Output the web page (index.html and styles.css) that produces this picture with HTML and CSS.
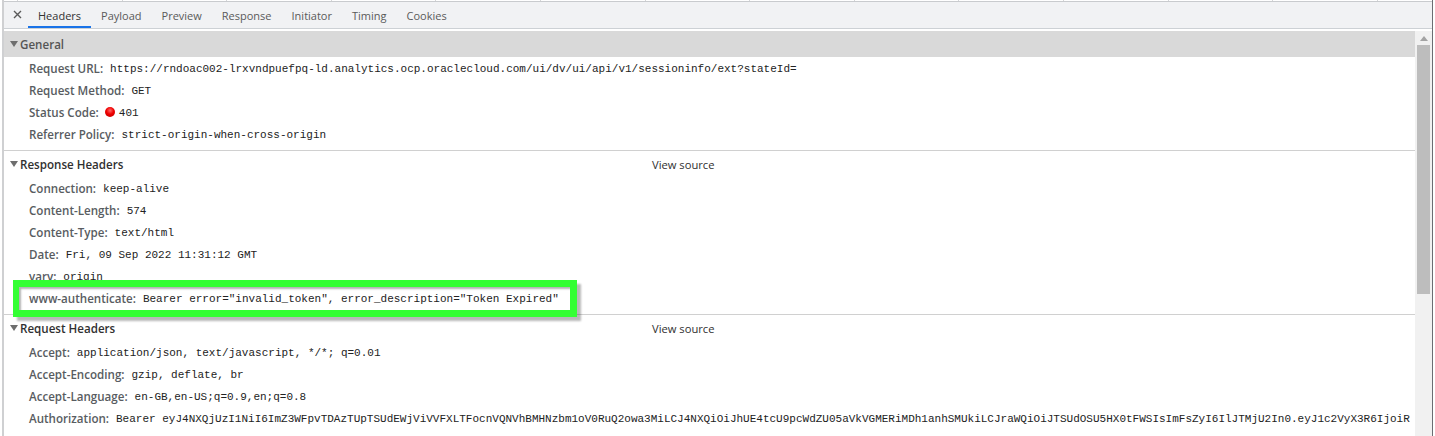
FILE: index.html
```html
<!DOCTYPE html>
<html lang="en">
<head>
<meta charset="utf-8">
<title>Headers</title>
<link rel="stylesheet" href="styles.css">
</head>
<body>
<div class="window">
  <div class="ruler"></div>
  <div class="tabbar">
    <svg class="close" width="9" height="9" viewBox="0 0 9 9"><path d="M1 1l7 7M8 1L1 8" stroke="#5a5a5a" stroke-width="1.4" fill="none"/></svg>
    <span class="tab active">Headers</span>
    <span class="tab">Payload</span>
    <span class="tab">Preview</span>
    <span class="tab">Response</span>
    <span class="tab">Initiator</span>
    <span class="tab">Timing</span>
    <span class="tab">Cookies</span>
  </div>
  <div class="body">
    <div class="content">
      <section class="section">
        <div class="title title-general"><i class="caret"></i>General</div>
        <div class="row"><b>Request URL:</b><code>https://rndoac002-lrxvndpuefpq-ld.analytics.ocp.oraclecloud.com/ui/dv/ui/api/v1/sessioninfo/ext?stateId=</code></div>
        <div class="row"><b>Request Method:</b><code>GET</code></div>
        <div class="row"><b>Status Code:</b><i class="dot"></i><code>401</code></div>
        <div class="row"><b>Referrer Policy:</b><code>strict-origin-when-cross-origin</code></div>
      </section>
      <section class="section">
        <div class="title"><i class="caret"></i><span class="name">Response Headers</span><span class="source">View source</span></div>
        <div class="row"><b>Connection:</b><code>keep-alive</code></div>
        <div class="row"><b>Content-Length:</b><code>574</code></div>
        <div class="row"><b>Content-Type:</b><code>text/html</code></div>
        <div class="row"><b>Date:</b><code>Fri, 09 Sep 2022 11:31:12 GMT</code></div>
        <div class="row"><b>vary:</b><code>origin</code></div>
        <div class="row"><b>www-authenticate:</b><code>Bearer error="invalid_token", error_description="Token Expired"</code></div>
      </section>
      <section class="section">
        <div class="title"><i class="caret"></i><span class="name">Request Headers</span><span class="source">View source</span></div>
        <div class="row"><b>Accept:</b><code>application/json, text/javascript, */*; q=0.01</code></div>
        <div class="row"><b>Accept-Encoding:</b><code>gzip, deflate, br</code></div>
        <div class="row"><b>Accept-Language:</b><code>en-GB,en-US;q=0.9,en;q=0.8</code></div>
        <div class="row clip"><b>Authorization:</b><code>Bearer eyJ4NXQjUzI1NiI6ImZ3WFpvTDAzTUpTSUdEWjViVVFXLTFocnVQNVhBMHNzbm1oV0RuQ2owa3MiLCJ4NXQiOiJhUE4tcU9pcWdZU05aVkVGMERiMDh1anhSMUkiLCJraWQiOiJTSUdOSU5HX0tFWSIsImFsZyI6IlJTMjU2In0.eyJ1c2VyX3R6IjoiR</code></div>
        <div class="row clip more"><code>xvlcnmzamlsnTvoxcuadwzevcnrsablxIemrsxnzuvdaGnmsoulVxamzrnexbuozMvcnesldawxrnmzouGaevbxcrsnmzIouwlaxvecndsrmzaoTxunevblcmsarwzxnoudGevmcazlrsnxuoIvbewamcnzdrxsouavMlenzcxrwsbmaounGzedvxacnrlsmouzwIaxbevnc</code></div>
      </section>
    </div>
    <div class="scrollbar">
      <svg class="arrow" width="8" height="5" viewBox="0 0 8 5"><path d="M4 0l4 5H0z" fill="#a3a3a3"/></svg>
      <div class="thumb"></div>
    </div>
  </div>
  <div class="callout"></div>
</div>
</body>
</html>
```
FILE: styles.css
```css
* { box-sizing: border-box; }
html, body { margin: 0; height: 100%; background: #fff; }
body { overflow: hidden; font-family: "Open Sans", "Noto Sans", sans-serif; font-size: 11.6px; color: #5a5a5a; }
.window {
  position: relative;
  width: 1431px;
  height: 436px;
  margin-left: 2px;
  overflow: hidden;
  border-left: 2px solid #cfd0d2;
  border-right: 1px solid #6b6d72;
  display: flex;
  flex-direction: column;
}
.ruler {
  flex: none;
  height: 2px;
  border-bottom: 1px solid #c9cbce;
  background: repeating-linear-gradient(90deg, #d5d6d8 0 1px, #fff 1px 104.6px);
  background-position: 13px 0;
}
.tabbar {
  flex: none;
  height: 27px;
  display: flex;
  align-items: stretch;
  background: #f1f2f4;
  border-bottom: 1px solid #cdd1d5;
  padding-left: 9px;
  font-size: 11px;
}
.close { flex: none; margin: 8px 6px 0 0; }
.tab {
  display: flex;
  align-items: center;
  padding: 0 10px;
  color: #5a5a5a;
  white-space: nowrap;
}
.tab.active { color: #333; box-shadow: inset 0 -2px 0 #1a73e8; }
.body { flex: 1; display: flex; min-height: 0; padding-top: 2px; }
.content { flex: 1; min-width: 0; overflow: hidden; }
.section { border-bottom: 1px solid #d0d0d0; padding-bottom: 5px; }
.title {
  display: flex;
  align-items: center;
  height: 26px;
  padding-left: 6px;
  color: #303030;
  font-weight: 600;
}
.title-general { background: #d9d9d9; color: #555; }
.caret {
  width: 0;
  height: 0;
  margin-right: 2px;
  border-left: 4px solid transparent;
  border-right: 4px solid transparent;
  border-top: 6px solid #6e6e6e;
}
.name { width: 632px; }
.source { color: #303030; font-weight: 400; font-size: 11.2px; }
.row { display: flex; align-items: center; height: 22px; padding-left: 25px; white-space: nowrap; }
.row b { font-weight: 600; margin-right: 7px; color: #585c61; }
.row code { margin-top: 2px; font-family: "Liberation Mono", monospace; font-size: 11px; color: #222; }
.clip { overflow: hidden; }
.more { padding-left: 112px; }
.dot {
  width: 10px;
  height: 10px;
  border-radius: 50%;
  margin: 0 4px 0 -1px;
  background: radial-gradient(circle at 50% 35%, #f66 0, #e00 45%, #b00 100%);
}
.scrollbar { flex: none; width: 17px; background: #f1f1f1; display: flex; flex-direction: column; align-items: center; }
.arrow { margin-top: 5px; }
.thumb { width: 13px; height: 249px; margin-top: 4px; background: #bdbdbd; }
.callout {
  position: absolute;
  left: 9px;
  top: 280px;
  width: 564px;
  height: 37px;
  border: 7px solid #33ff33;
  border-left-width: 6px;
  box-shadow: 4px 4px 2px rgba(0,0,0,.28), inset 2px 2px 2px rgba(0,0,0,.3);
}
```
